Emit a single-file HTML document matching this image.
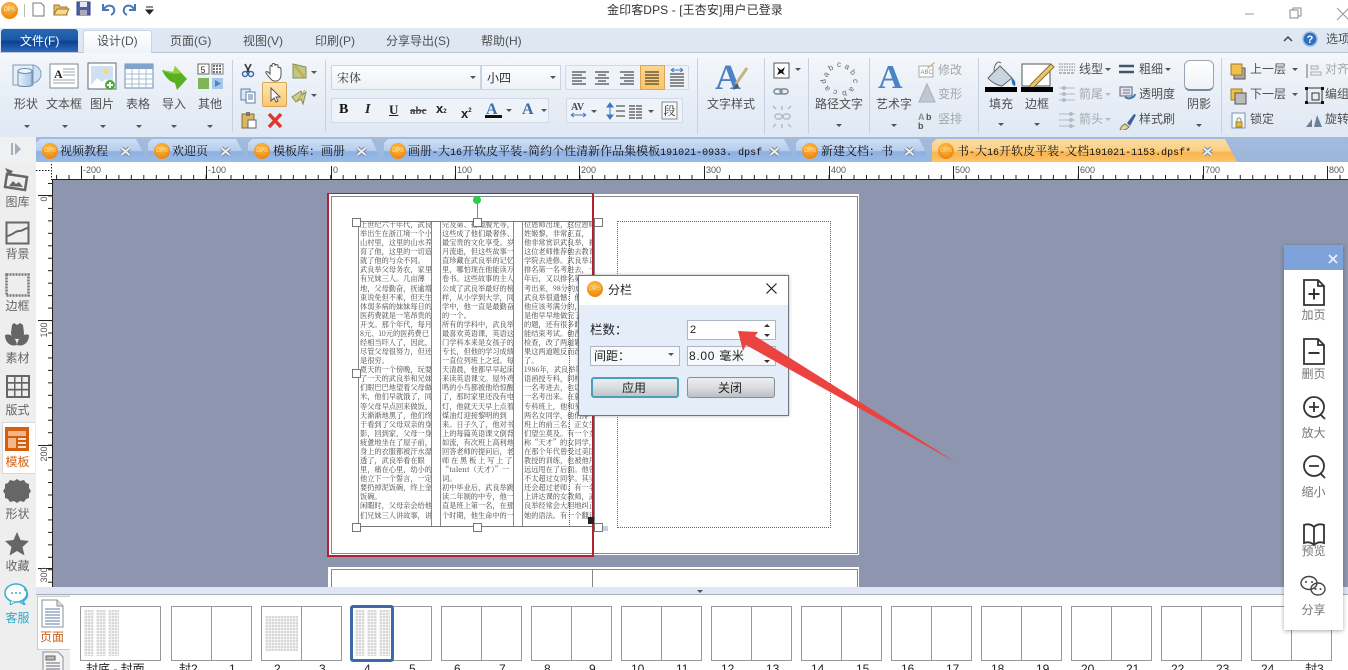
<!DOCTYPE html>
<html lang="zh"><head><meta charset="utf-8"><title>金印客DPS</title>
<style>
html,body{margin:0;padding:0;width:1348px;height:670px;overflow:hidden;background:#fff}
body{position:relative;font:12px/14px "Liberation Sans","Noto Sans CJK SC",sans-serif;color:#505050}
div,i,svg,b{position:absolute;font-style:normal;font-weight:normal}
.t{white-space:nowrap}
.g{color:#a4a8ad}
.dps{border-radius:50%;background:radial-gradient(circle at 45% 30%,#fbc04a,#f08a12 70%,#d96f0a);color:#ffe9c0;font-size:6px;line-height:16px;width:16px;height:16px;text-align:center;letter-spacing:-.2px}
.arr{width:0;height:0;border-left:3px solid transparent;border-right:3px solid transparent;border-top:3px solid #555}
.tab{top:139px;height:23px;background:linear-gradient(#cfdff3,#b6cdec 50%,#8db0e2 55%,#9abce8);clip-path:polygon(0 100%,0 4px,4px 0,calc(100% - 12px) 0,100% 100%)}
.tt{top:144px;font:12px/14px "Noto Serif CJK SC",serif;color:#111;white-space:nowrap}
.tt span{font:10px/14px "Liberation Mono",monospace}
.x{top:146px}
.sb{color:#666;left:0;width:35px;text-align:center}
.col{top:221px;width:74px;font:7.2px/9.08px "Noto Serif CJK SC",serif;color:#444;white-space:pre;height:305px;overflow:hidden;border-left:1px solid #888;border-right:1px solid #888;padding-left:1px;box-sizing:border-box}
.h{width:9px;height:9px;background:#fff;border:1px solid #777;box-sizing:border-box}
.th{top:606px;height:55px;width:81px;background:#fff;border:1px solid #999;box-sizing:border-box}
.th:after{content:"";position:absolute;left:39px;top:0;bottom:0;width:1px;background:#999}
.th.nl:after{display:none}
.tl{top:662px;color:#222;font-size:12px;line-height:14px;white-space:nowrap}
.tex{background:repeating-linear-gradient(90deg,rgba(255,255,255,.55) 0 1px,transparent 1px 3px),repeating-linear-gradient(#d8d8d8 0 2px,#f0f0f0 2px 3px)}
.rp{left:1284px;width:59px;text-align:center;color:#777}
</style></head><body>

<!-- title bar -->
<div class="dps" style="left:1px;top:2px;width:17px;height:17px;line-height:17px">DPS</div>
<div style="left:24px;top:4px;width:1px;height:13px;background:#bbb"></div>
<svg style="left:30px;top:0" width="130" height="20">
<path d="M3 3h8l3 3v10H3z" fill="#fff" stroke="#777"/>
<path d="M24 15V5h5l1 2h7v8z" fill="#e9bd5c" stroke="#9a7a32"/><path d="M24 15l3-6h12l-3 6z" fill="#f6d88a" stroke="#9a7a32"/>
<rect x="47" y="2" width="13" height="13" fill="#4c5fa8" stroke="#33407c"/><rect x="50" y="2" width="7" height="5" fill="#e4e8f3"/><rect x="50" y="10" width="7" height="5" fill="#aab"/>
<path d="M73 4v6h6M74 9c3-5 9-4 10 0 1 3-1 5-3 6" fill="none" stroke="#4a76b5" stroke-width="2"/>
<path d="M105 4v6h-6M104 9c-3-5-9-4-10 0-1 3 1 5 3 6" fill="none" stroke="#4a76b5" stroke-width="2"/>
<path d="M116 7h7M116 10h7l-3.500 4z" fill="#222" stroke="#222"/>
</svg>
<div class="t" style="left:607px;top:3px;color:#333;letter-spacing:.1px">金印客DPS - [王杏安]用户已登录</div>
<svg style="left:1240px;top:4px" width="108" height="20"><path d="M5 10h9" stroke="#999"/><rect x="53" y="4" width="8" height="8" fill="#fff" stroke="#888"/><rect x="50" y="6" width="8" height="8" fill="#fff" stroke="#888"/><path d="M97 4l12 12M109 4L97 16" stroke="#999"/></svg>

<!-- menu row -->
<div style="left:0;top:28px;width:1348px;height:25px;background:linear-gradient(#dfe8f3,#dde6f2);border-bottom:1px solid #b9c6d6;box-sizing:border-box"></div>
<div style="left:1px;top:29px;width:77px;height:23px;background:linear-gradient(#2a66b2,#1c5aa8 45%,#0d4190 55%,#2e6cbd);border-radius:3px 3px 0 0"></div>
<div class="t" style="left:20px;top:34px;color:#fff">文件(F)</div>
<div style="left:83px;top:30px;width:69px;height:23px;background:linear-gradient(#fff,#eef3fa);border:1px solid #c9d5e4;border-bottom:none;border-radius:3px 3px 0 0;box-sizing:border-box"></div>
<div class="t" style="left:97px;top:34px">设计(D)</div>
<div class="t" style="left:170px;top:34px">页面(G)</div>
<div class="t" style="left:243px;top:34px">视图(V)</div>
<div class="t" style="left:315px;top:34px">印刷(P)</div>
<div class="t" style="left:386px;top:34px">分享导出(S)</div>
<div class="t" style="left:481px;top:34px">帮助(H)</div>
<svg style="left:1280px;top:30px" width="40" height="20"><path d="M4 11l4-4 4 4" fill="none" stroke="#444" stroke-width="1.500"/><circle cx="30" cy="9" r="7" fill="#2f6fc0" stroke="#9db9de" stroke-width="1.500"/><text x="30" y="13" font-size="11" font-weight="bold" fill="#fff" text-anchor="middle" font-family="Liberation Sans">?</text></svg>
<div class="t" style="left:1326px;top:32px">选项</div>

<!-- ribbon -->
<div style="left:0;top:53px;width:1348px;height:85px;background:linear-gradient(#f4f7fb,#e6edf6 60%,#dfe8f3)"></div>
<div style="left:232px;top:60px;width:1px;height:72px;background:#c6d1df"></div>
<div style="left:325px;top:60px;width:1px;height:72px;background:#c6d1df"></div>
<div style="left:697px;top:58px;width:1px;height:76px;background:#c6d1df"></div>
<div style="left:764px;top:58px;width:1px;height:76px;background:#c6d1df"></div>
<div style="left:808px;top:58px;width:1px;height:76px;background:#c6d1df"></div>
<div style="left:869px;top:58px;width:1px;height:76px;background:#c6d1df"></div>
<div style="left:978px;top:58px;width:1px;height:76px;background:#c6d1df"></div>
<div style="left:1221px;top:58px;width:1px;height:76px;background:#c6d1df"></div>

<svg style="left:0;top:52px" width="330" height="85">
<defs><linearGradient id="bl" x1="0" x2="1"><stop offset="0" stop-color="#e8f0f8"/><stop offset="1" stop-color="#a8c6e4"/></linearGradient></defs>
<!-- shape -->
<circle cx="32" cy="22" r="9" fill="#cfe0f1" stroke="#7fa0c0"/><rect x="13" y="13" width="20" height="20" fill="#e6eef7" stroke="#7f9ab8"/>
<path d="M18 19v14c0 2 14 2 14 0V19z" fill="url(#bl)" stroke="#6b8db0"/><ellipse cx="25" cy="19" rx="7" ry="2.500" fill="#eef4fa" stroke="#6b8db0"/>
<!-- textbox -->
<rect x="50" y="12" width="28" height="24" fill="#fff" stroke="#7b8a9a"/><text x="54" y="26" font-family="Liberation Serif" font-weight="bold" font-size="12" fill="#222">A</text><path d="M63 17h12M63 20h12M63 23h12M53 28h22M53 31h22" stroke="#9aa4ae"/>
<!-- picture -->
<rect x="88" y="11" width="28" height="26" fill="#fff" stroke="#667"/><rect x="91" y="14" width="22" height="19" fill="#cfe0f3"/><circle cx="106" cy="19" r="3" fill="#f0d98a"/><path d="M91 33l6-7 5 4 4-3 7 6z" fill="#fff"/><circle cx="110" cy="33" r="5" fill="#4aaa34"/><path d="M110 30v6M107 33h6" stroke="#fff" stroke-width="2"/>
<!-- table -->
<rect x="125" y="12" width="28" height="24" fill="#fff" stroke="#7190b4"/><rect x="125" y="12" width="28" height="5" fill="#7fa3cb"/><path d="M125 22h28M125 27h28M125 32h28M132 17v19M139 17v19M146 17v19" stroke="#a6bdd6"/>
<!-- import -->
<path d="M162 18l11 2 2-6 12 13-10 11-2-7c-4-1-9-4-13-13z" fill="#5aae22"/><path d="M162 18l11 2 2-6 6 7c-6 2-14 0-19-3z" fill="#90d23e"/>
<!-- other -->
<rect x="198" y="12" width="11" height="10" fill="#fff" stroke="#666"/><text x="200.500" y="21" font-size="9" fill="#333" font-family="Liberation Sans">5</text><rect x="212" y="12" width="11" height="10" fill="#fff" stroke="#777"/><path d="M213 14h9M213 17h9M213 20h9" stroke="#445" stroke-width="1.500" stroke-dasharray="2 1"/><rect x="198" y="26" width="11" height="11" fill="#7fb45a"/><rect x="212" y="26" width="11" height="11" fill="#a7c8ea"/><path d="M215 28l6 3.500-6 3.500z" fill="#4d86c4"/>
<!-- arrows -->
<g fill="#555"><path d="M24 73h6l-3 3zM62 73h6l-3 3zM100 73h6l-3 3zM136 73h6l-3 3zM171 73h6l-3 3zM207 73h6l-3 3z"/></g>
<!-- clipboard section -->
<path d="M245 12l4 8M251 12l-4 8" stroke="#333" stroke-width="1.500"/><circle cx="245" cy="22" r="2.500" fill="none" stroke="#3a6aa8" stroke-width="1.500"/><circle cx="251" cy="22" r="2.500" fill="none" stroke="#3a6aa8" stroke-width="1.500"/>
<path d="M270 22v-7c0-2 2-2 2 0v-2c0-2 3-2 3 0v1c0-2 3-2 3 0v2c0-1 3-1 3 1v6c0 3-2 6-5 6h-2c-2 0-3-2-5-4l-3-4c-1-2 2-2 4 1z" fill="#fff" stroke="#555"/>
<path d="M293 12l13 3v11h-13z" fill="#b9c98a" stroke="#8a8a55"/><path d="M295 14l9 11" stroke="#d8a13c" stroke-width="2"/><path d="M311 19h6l-3 3z" fill="#555"/>
<rect x="241" y="37" width="9" height="11" fill="#dce6f2" stroke="#5f7da0"/><rect x="246" y="40" width="9" height="11" fill="#fff" stroke="#5f7da0"/><path d="M248 43h5M248 45h5M248 47h5" stroke="#4d78a8"/>
<path d="M292 45l9-6 1 4 4-3-3 12-2-5-5 3z" fill="#c7d08e" stroke="#8a8a55"/><path d="M296 50l9-12" stroke="#c9a04a"/><path d="M311 42h6l-3 3z" fill="#555"/>
<rect x="242" y="62" width="12" height="14" fill="#d9b766" stroke="#85702f"/><rect x="246" y="60" width="4" height="4" fill="#777"/><rect x="248" y="68" width="8" height="8" fill="#fff" stroke="#666"/>
<path d="M269 62l12 13M281 62l-12 13" stroke="#e0372c" stroke-width="3.500"/>
</svg>
<div style="left:262px;top:82px;width:25px;height:25px;background:linear-gradient(#fde5b0,#fbc873);border:1px solid #d9a856;box-sizing:border-box;border-radius:2px"></div>
<svg style="left:262px;top:82px" width="25" height="25"><path d="M9 6l0 13 3-3 2 4 2-1-2-4h4z" fill="#fff" stroke="#555"/></svg>

<div class="t" style="left:14px;top:97px">形状</div>
<div class="t" style="left:46px;top:97px">文本框</div>
<div class="t" style="left:90px;top:97px">图片</div>
<div class="t" style="left:126px;top:97px">表格</div>
<div class="t" style="left:162px;top:97px">导入</div>
<div class="t" style="left:198px;top:97px">其他</div>

<!-- font boxes -->
<div style="left:331px;top:65px;width:150px;height:25px;background:linear-gradient(#fbfcfe,#edf2f8);border:1px solid #c9d4e2;box-sizing:border-box;border-radius:2px 0 0 2px"></div>
<div style="left:481px;top:65px;width:80px;height:25px;background:linear-gradient(#fbfcfe,#edf2f8);border:1px solid #c9d4e2;box-sizing:border-box"></div>
<div class="t" style="left:337px;top:71px;color:#333;font-family:'Noto Serif CJK SC',serif">宋体</div>
<div class="t" style="left:487px;top:71px;color:#333">小四</div>
<div class="arr" style="left:470px;top:76px"></div><div class="arr" style="left:550px;top:76px"></div>

<div style="left:565px;top:65px;width:124px;height:25px;background:#eef3f9;border:1px solid #d0d9e5;box-sizing:border-box;border-radius:2px"></div>
<div style="left:640px;top:65px;width:25px;height:25px;background:linear-gradient(#fcd58c,#fbc56c);border:1px solid #d8a856;box-sizing:border-box"></div>
<svg style="left:565px;top:65px" width="125" height="25">
<g stroke="#222" fill="none"><path d="M7 7h14M7 10h10M7 13h14M7 16h10M7 19h14"/><path d="M30 7h14M33 10h8M30 13h14M33 16h8M30 19h14"/><path d="M55 7h14M59 10h10M55 13h14M59 16h10M55 19h14"/><path d="M80 7h14M80 10h14M80 13h14M80 16h14M80 19h14"/><path d="M105 9h14M105 12h14M105 15h14M105 18h14M105 21h14"/></g>
<path d="M106 5h12M106 5l3-2M106 5l3 2M118 5l-3-2M118 5l-3 2" stroke="#3a78b8" fill="none"/>
</svg>

<div style="left:331px;top:98px;width:218px;height:25px;background:#eef3f9;border:1px solid #d0d9e5;box-sizing:border-box;border-radius:2px"></div>
<div class="t" style="left:339px;top:103px;font:bold 14px/14px 'Liberation Serif',serif;color:#111">B</div>
<div class="t" style="left:365px;top:103px;font:italic bold 14px/14px 'Liberation Serif',serif;color:#222">I</div>
<div class="t" style="left:389px;top:103px;font:bold 13px/14px 'Liberation Serif',serif;color:#222;text-decoration:underline">U</div>
<div class="t" style="left:410px;top:104px;font:bold 11px/14px 'Liberation Serif',serif;color:#444;text-decoration:line-through">abc</div>
<div class="t" style="left:436px;top:102px;font:bold 13px/14px 'Liberation Sans',sans-serif;color:#222">x<span style="font-size:6px">2</span></div>
<div class="t" style="left:461px;top:104px;font:bold 13px/14px 'Liberation Sans',sans-serif;color:#222">x<span style="font-size:6px;vertical-align:6px">2</span></div>
<div class="t" style="left:486px;top:102px;font:bold 16px/16px 'Liberation Serif',serif;color:#3b6fae">A</div>
<div style="left:485px;top:115px;width:17px;height:3px;background:#111"></div><div class="arr" style="left:506px;top:109px"></div>
<div class="t" style="left:522px;top:102px;font:bold 16px/16px 'Liberation Serif',serif;color:#3e6a9e">A</div><div class="arr" style="left:541px;top:109px"></div>

<div style="left:566px;top:98px;width:117px;height:25px;background:#eef3f9;border:1px solid #d0d9e5;box-sizing:border-box;border-radius:2px"></div>
<svg style="left:566px;top:98px" width="118" height="25">
<text x="5" y="12" font-family="Liberation Serif" font-weight="bold" font-size="10" fill="#445">AV</text><path d="M5 17h15M5 17l3-2M5 17l3 2M20 17l-3-2M20 17l-3 2" stroke="#3a78b8" fill="none"/><path d="M25 12h6l-3 3z" fill="#555"/>
<path d="M44 6v14M44 5l-3 4h6zM44 21l-3-4h6z" fill="#3a78b8" stroke="#3a78b8"/><path d="M50 8h9M50 13h9M50 18h9" stroke="#333"/>
<path d="M63 8h13M63 11h13M63 14h13M63 17h13M63 20h13" stroke="#222" stroke-dasharray="6 1"/><path d="M82 12h6l-3 3z" fill="#555"/>
<rect x="96" y="4" width="15" height="17" fill="#f7f9fc" stroke="#888"/><text x="97.500" y="17" font-size="12" fill="#333" font-family="Noto Serif CJK SC">段</text>
</svg>

<!-- text style -->
<svg style="left:710px;top:58px" width="50" height="36"><text x="5" y="31" font-family="Liberation Serif" font-weight="bold" font-size="36" fill="#4b83c4">A</text><path d="M37 10L26 26" stroke="#c2b58a" stroke-width="3"/><path d="M27 25l-3 5-1 2 6-3z" fill="#555"/></svg>
<div class="t" style="left:707px;top:97px">文字样式</div>
<!-- link icons -->
<svg style="left:770px;top:58px" width="36" height="72">
<rect x="4" y="5" width="15" height="15" fill="#fff" stroke="#556"/><path d="M7 9l4 3 4-3-2 5 2 3-4-2-4 2 2-4z" fill="#111"/><path d="M25 10h6l-3 3z" fill="#555"/>
<g fill="none" stroke="#7a8696" stroke-width="1.500"><rect x="4" y="31" width="8" height="5" rx="2.500"/><rect x="10" y="31" width="8" height="5" rx="2.500"/></g>
<g fill="none" stroke="#b5bcc6" stroke-width="1.500"><rect x="5" y="56" width="7" height="5" rx="2.500"/><rect x="13" y="56" width="7" height="5" rx="2.500"/><path d="M12 52v-4M12 66v4M6 51l-3-3M18 51l3-3M6 66l-3 3M18 66l3 3"/></g>
</svg>
<!-- path text -->
<svg style="left:817px;top:60px" width="50" height="36"><g font-family="Liberation Sans" font-size="8" fill="#666" text-anchor="middle">
<text x="11" y="16" transform="rotate(-50 11 16)">a</text><text x="15" y="10" transform="rotate(-30 15 10)">b</text><text x="22" y="7">c</text><text x="29" y="9" transform="rotate(25 29 9)">a</text><text x="34" y="14" transform="rotate(50 34 14)">b</text><text x="36" y="21" transform="rotate(90 36 21)">c</text><text x="33" y="28" transform="rotate(130 33 28)">a</text><text x="27" y="31" transform="rotate(170 27 31)">b</text><text x="19" y="30" transform="rotate(200 19 30)">c</text><text x="12" y="27" transform="rotate(230 12 27)">a</text><text x="9" y="21" transform="rotate(260 9 21)">d</text></g></svg>
<div class="t" style="left:815px;top:97px">路径文字</div>
<div class="arr" style="left:836px;top:124px"></div>
<svg style="left:878px;top:58px" width="30" height="36"><text x="0" y="30" font-family="Liberation Serif" font-weight="bold" font-size="34" fill="#4b83c4">A</text></svg>
<div class="t" style="left:876px;top:97px">艺术字</div>
<div class="arr" style="left:891px;top:124px"></div>
<svg style="left:916px;top:58px" width="22" height="72">
<rect x="3" y="8" width="14" height="11" fill="#fff" stroke="#aaa"/><text x="4.500" y="16" font-size="6" fill="#889">ABC</text><path d="M11 10l7-6 1 1-7 6z" fill="#c5b78e"/>
<path d="M11 26l-8 18h16z" fill="#c0c8d2" stroke="#a7b0bc"/>
<text x="2" y="62" font-size="9" font-weight="bold" fill="#8a8f96" font-family="Liberation Sans">A</text><text x="10" y="62" font-size="9" font-weight="bold" fill="#555" font-family="Liberation Sans">b</text><text x="2" y="71" font-size="9" font-weight="bold" fill="#555" font-family="Liberation Sans">b</text>
</svg>
<div class="t g" style="left:938px;top:63px">修改</div>
<div class="t g" style="left:938px;top:87px">变形</div>
<div class="t g" style="left:938px;top:112px">竖排</div>

<!-- fill / border -->
<svg style="left:985px;top:58px" width="70" height="36">
<path d="M3 20l12-12 12 12-10 8c-3 0-11-4-14-8z" fill="#c9d6e2" stroke="#666"/><path d="M9 14c0-8 4-12 7-9" fill="none" stroke="#666"/><path d="M27 20c3 2 4 5 3 8-3 0-4-5-3-8z" fill="#2e6fb5"/>
<rect x="0" y="29" width="32" height="5" fill="#000"/>
<rect x="37" y="6" width="28" height="22" fill="#fff" stroke="#555"/><path d="M46 26l20-20 3 3-20 20-5 1z" fill="#e9c66e" stroke="#8c7436"/>
<rect x="36" y="29" width="32" height="5" fill="#000"/>
</svg>
<div class="t" style="left:989px;top:97px">填充</div><div class="t" style="left:1025px;top:97px">边框</div>
<div class="arr" style="left:998px;top:123px"></div><div class="arr" style="left:1034px;top:123px"></div>
<svg style="left:1058px;top:60px" width="20" height="70">
<path d="M1 4h16M1 7h16M1 10h16" stroke="#777" stroke-dasharray="1.500 1"/><path d="M1 13h16" stroke="#777" stroke-dasharray="3 1"/>
<g stroke="#b5bac2" fill="#b5bac2"><path d="M1 28h16M1 34h16M1 40h16"/><circle cx="6" cy="28" r="1.500"/><circle cx="6" cy="34" r="1.500"/><circle cx="6" cy="40" r="1.500"/></g>
<g stroke="#b5bac2" fill="#b5bac2"><path d="M1 54h16M1 60h16M1 66h16"/><circle cx="13" cy="54" r="1.500"/><circle cx="13" cy="60" r="1.500"/><circle cx="13" cy="66" r="1.500"/></g>
</svg>
<div class="t" style="left:1079px;top:62px">线型</div><div class="arr" style="left:1105px;top:68px"></div>
<div class="t g" style="left:1079px;top:87px">箭尾</div><div class="arr" style="left:1105px;top:93px;border-top-color:#bbb"></div>
<div class="t g" style="left:1079px;top:112px">箭头</div><div class="arr" style="left:1105px;top:118px;border-top-color:#bbb"></div>
<svg style="left:1118px;top:60px" width="20" height="70">
<path d="M1 6h15M1 12h15" stroke="#445566" stroke-width="2.500"/>
<rect x="2" y="27" width="12" height="9" fill="#dde3ea" stroke="#667"/><path d="M5 30h7M5 33h7" stroke="#778"/><path d="M7 37a6 5 0 0 0 10-3" fill="none" stroke="#3a78b8" stroke-width="2"/>
<path d="M2 70c1-4 3-5 5-6l4 3c-2 2-5 4-9 3z" fill="#e7d28f" stroke="#776"/><path d="M9 63l7-9 2 1-6 11z" fill="#3b5f9c"/>
</svg>
<div class="t" style="left:1139px;top:62px">粗细</div><div class="arr" style="left:1165px;top:68px"></div>
<div class="t" style="left:1139px;top:87px">透明度</div>
<div class="t" style="left:1139px;top:112px">样式刷</div>
<div style="left:1184px;top:60px;width:30px;height:31px;background:linear-gradient(#fff,#eef3f9);border:1px solid #9aa5b3;border-bottom:2px solid #7d8896;box-sizing:border-box;border-radius:6px"></div>
<div class="t" style="left:1187px;top:97px">阴影</div><div class="arr" style="left:1196px;top:124px"></div>

<svg style="left:1228px;top:60px" width="22" height="70">
<rect x="6" y="8" width="11" height="11" fill="#aaa" stroke="#555"/><rect x="3" y="4" width="11" height="11" fill="#f1c14d" stroke="#a07a28"/>
<rect x="3" y="29" width="11" height="11" fill="#f1c14d" stroke="#a07a28"/><rect x="7" y="33" width="11" height="11" fill="#bbb" stroke="#555"/>
<rect x="4" y="53" width="13" height="15" fill="#f4f7fb" stroke="#7b93b4"/><path d="M8 62h6v5H8z" fill="#e3bb44" stroke="#a88a22"/><path d="M9 62v-2a2 2 0 0 1 4 0v2" fill="none" stroke="#888"/>
</svg>
<div class="t" style="left:1250px;top:62px">上一层</div><div class="arr" style="left:1292px;top:68px"></div>
<div class="t" style="left:1250px;top:87px">下一层</div><div class="arr" style="left:1292px;top:93px"></div>
<div class="t" style="left:1250px;top:112px">锁定</div>
<svg style="left:1304px;top:60px" width="22" height="70">
<path d="M3 4v14" stroke="#999" stroke-width="1.500"/><path d="M7 6h7v3H7zM7 12h10v3H7z" fill="none" stroke="#aaa"/>
<rect x="3" y="28" width="15" height="15" fill="none" stroke="#333"/><rect x="8" y="33" width="7" height="7" fill="none" stroke="#333"/><g fill="#111"><rect x="1" y="27" width="3" height="3"/><rect x="17" y="27" width="3" height="3"/><rect x="1" y="41" width="3" height="3"/><rect x="17" y="41" width="3" height="3"/></g>
<path d="M2 67l6-8v8zM10 67l3-12 5 12z" fill="#6d7f93"/>
</svg>
<div class="t g" style="left:1325px;top:62px">对齐</div>
<div class="t" style="left:1325px;top:87px">编组</div>
<div class="t" style="left:1325px;top:112px">旋转</div>

<!-- tab bar -->
<div style="left:0;top:137px;width:1348px;height:25px;background:#eef0f2"></div>
<div style="left:36px;top:137px;width:1312px;height:25px;background:linear-gradient(#a2bbdd,#9cb6dc)"></div>
<svg style="left:9px;top:141px" width="14" height="16"><rect x="2" y="2" width="2" height="12" fill="#aab"/><path d="M6 2l6 6-6 6z" fill="#aab"/></svg>
<div class="tab" style="left:36px;width:112px"></div>
<div class="tab" style="left:148px;width:100px"></div>
<div class="tab" style="left:248px;width:135px"></div>
<div class="tab" style="left:384px;width:412px"></div>
<div class="tab" style="left:796px;width:135px"></div>
<div class="tab" style="left:932px;width:305px;background:linear-gradient(#fcdca0,#fbd086 50%,#f9b44f 60%,#fbc46c)"></div>
<div class="dps" style="left:42px;top:143px">DPS</div><div class="tt" style="left:60px">视频教程</div>
<svg class="x" style="left:119px" width="13" height="11"><path d="M2.500 2l8 7M10.500 2l-8 7" stroke="#7d8794" stroke-width="4"/><path d="M2.500 2l8 7M10.500 2l-8 7" stroke="#e8edf3" stroke-width="2"/></svg>
<div class="dps" style="left:154px;top:143px">DPS</div><div class="tt" style="left:172px">欢迎页</div>
<svg class="x" style="left:219px" width="13" height="11"><path d="M2.500 2l8 7M10.500 2l-8 7" stroke="#7d8794" stroke-width="4"/><path d="M2.500 2l8 7M10.500 2l-8 7" stroke="#e8edf3" stroke-width="2"/></svg>
<div class="dps" style="left:254px;top:143px">DPS</div><div class="tt" style="left:273px">模板库：画册</div>
<svg class="x" style="left:355px" width="13" height="11"><path d="M2.500 2l8 7M10.500 2l-8 7" stroke="#7d8794" stroke-width="4"/><path d="M2.500 2l8 7M10.500 2l-8 7" stroke="#e8edf3" stroke-width="2"/></svg>
<div class="dps" style="left:390px;top:143px">DPS</div><div class="tt" style="left:408px">画册<span>-</span>大<span>16</span>开软皮平装<span>-</span>简约个性清新作品集模板<span>191021-0933. dpsf</span></div>
<svg class="x" style="left:768px" width="13" height="11"><path d="M2.500 2l8 7M10.500 2l-8 7" stroke="#7d8794" stroke-width="4"/><path d="M2.500 2l8 7M10.500 2l-8 7" stroke="#e8edf3" stroke-width="2"/></svg>
<div class="dps" style="left:802px;top:143px">DPS</div><div class="tt" style="left:821px">新建文档：书</div>
<svg class="x" style="left:903px" width="13" height="11"><path d="M2.500 2l8 7M10.500 2l-8 7" stroke="#7d8794" stroke-width="4"/><path d="M2.500 2l8 7M10.500 2l-8 7" stroke="#e8edf3" stroke-width="2"/></svg>
<div class="dps" style="left:938px;top:143px;color:#ffd9a0">DPS</div><div class="tt" style="left:957px">书<span>-</span>大<span>16</span>开软皮平装<span>-</span>文档<span>191021-1153.dpsf*</span></div>
<svg class="x" style="left:1201px" width="13" height="11"><path d="M2.500 2l8 7M10.500 2l-8 7" stroke="#7d8794" stroke-width="4"/><path d="M2.500 2l8 7M10.500 2l-8 7" stroke="#e8edf3" stroke-width="2"/></svg>

<!-- canvas -->
<div style="left:52px;top:180px;width:1296px;height:407px;background:#8d96ae"></div>

<!-- sidebar -->
<div style="left:0;top:162px;width:36px;height:508px;background:#eeeeee"></div>
<div style="left:2px;top:422px;width:33px;height:52px;background:#fff;border:1px solid #d8d8d8;border-right:none;box-sizing:border-box"></div>
<svg style="left:0;top:165px" width="36" height="440">
<g fill="#666">
<path d="M7 9l20 3-2 13-20-3z" fill="none" stroke="#666" stroke-width="2.500"/><path d="M5 3l8 3-4 5z"/><path d="M9 21l4-5 3 3 3-2 4 5z"/>
<rect x="6.500" y="57.500" width="22" height="21" fill="none" stroke="#666" stroke-width="2"/><path d="M7 71c6-1 8-5 12-5 4 0 6-3 9-3" fill="none" stroke="#666" stroke-width="2"/>
<rect x="6.500" y="109.500" width="22" height="21" fill="none" stroke="#777" stroke-width="2.500" stroke-dasharray="2 1"/>
<path d="M12 160l2-2 3 2 3-2 3 2 1 8c0 4-3 6-7 6s-6-3-6-6z"/><path d="M5 170c5-2 11 2 12 10-6 2-12-2-12-10zM29 170c-5-2-11 2-12 10 6 2 12-2 12-10z"/>
<path d="M6 210h24v23H6z" fill="#666"/><path d="M8 212h6v5H8zM15.500 212h5.500v5h-5.500zM22.500 212h5.500v5h-5.500zM8 218.800h6v5H8zM15.500 218.800h5.500v5h-5.500zM22.500 218.800h5.500v5h-5.500zM8 225.500h6v5.500H8zM15.500 225.500h5.500v5.500h-5.500zM22.500 225.500h5.500v5.500h-5.500z" fill="#eee"/>
<rect x="5" y="262" width="24" height="24" fill="#d2600e"/><path d="M8 266h18v5H8zM8 273h8v10H8z" fill="#f3b58a"/><path d="M18 273h8v2h-8zM18 277h8v2h-8zM18 281h8v2h-8z" fill="#f8e0cf"/>
<path d="M17 314l3 2 4-1 2 3 3 1 0 4 2 3-2 3 0 4-3 1-2 3-4-1-3 2-3-2-4 1-2-3-3-1 0-4-2-3 2-3 0-4 3-1 2-3 4 1z"/>
<path d="M17 367l3.500 8 8.500 1-6.500 6 2 8.500-7.500-4.500-7.500 4.500 2-8.500-6.500-6 8.500-1z"/>
</g>
<ellipse cx="16" cy="428" rx="11" ry="9" fill="#fff" stroke="#37b0cf" stroke-width="1.500"/><path d="M11 436l-1 4 5-3" fill="#fff" stroke="#37b0cf"/><path d="M24 424c3 2 4 5 3 8-1 2-2 3-4 4l2 4-5-3" fill="none" stroke="#37b0cf" stroke-width="1.500"/>
<circle cx="12" cy="428" r="1" fill="#37b0cf"/><circle cx="16" cy="428" r="1" fill="#37b0cf"/><circle cx="20" cy="428" r="1" fill="#37b0cf"/>
</svg>
<div class="t sb" style="top:195px">图库</div>
<div class="t sb" style="top:247px">背景</div>
<div class="t sb" style="top:299px">边框</div>
<div class="t sb" style="top:351px">素材</div>
<div class="t sb" style="top:403px">版式</div>
<div class="t sb" style="top:455px;color:#d2600e">模板</div>
<div class="t sb" style="top:507px">形状</div>
<div class="t sb" style="top:559px">收藏</div>
<div class="t sb" style="top:611px;color:#2fa9c6">客服</div>

<!-- rulers -->
<div style="left:36px;top:162px;width:1312px;height:18px;background:#fff"></div>
<div style="left:36px;top:162px;width:16px;height:425px;background:#fff"></div>
<svg style="left:36px;top:162px" width="1312" height="18">
<defs><pattern id="tk" patternUnits="userSpaceOnUse" x="45" y="0" width="12.46" height="18"><path d="M.5 13v5" stroke="#222"/></pattern></defs>
<rect x="16" y="0" width="1296" height="18" fill="url(#tk)"/>
<path d="M16 17.500h1296M45.500 4v14M170.500 4v14M295.500 4v14M419.500 4v14M543.500 4v14M668.500 4v14M793.500 4v14M917.500 4v14M1042.500 4v14M1167.500 4v14M1291.500 4v14" stroke="#222"/>
<path d="M0 8.500h15M15.500 2v16" stroke="#222" stroke-dasharray="1.500 1.500"/>
<g font-family="Liberation Sans" font-size="9" fill="#555"><text x="47" y="11">-200</text><text x="172" y="11">-100</text><text x="297" y="11">0</text><text x="421" y="11">100</text><text x="545" y="11">200</text><text x="670" y="11">300</text><text x="795" y="11">400</text><text x="919" y="11">500</text><text x="1044" y="11">600</text><text x="1169" y="11">700</text><text x="1293" y="11">800</text></g>
</svg>
<svg style="left:36px;top:180px" width="17" height="407">
<defs><pattern id="tv" patternUnits="userSpaceOnUse" x="0" y="3" width="17" height="12.46"><path d="M12 .5h5" stroke="#222"/></pattern></defs>
<rect x="0" y="0" width="17" height="407" fill="url(#tv)"/>
<path d="M16.500 0v407M2 15.500h15M2 140.500h15M2 265.500h15M2 388.500h15" stroke="#222"/>
<g font-family="Liberation Sans" font-size="9" fill="#555" text-anchor="middle"><text transform="translate(11 19) rotate(-90)">0</text><text transform="translate(11 150) rotate(-90)">100</text><text transform="translate(11 274) rotate(-90)">200</text><text transform="translate(11 395) rotate(-90)">300</text></g>
</svg>

<!-- page -->
<div style="left:328px;top:194px;width:531px;height:361px;background:#fff"></div>
<div style="left:331px;top:196px;width:527px;height:358px;border:1px solid #888;box-sizing:border-box"></div>
<div style="left:617px;top:221px;width:214px;height:307px;border:1px dotted #666;box-sizing:border-box"></div>
<div style="left:328px;top:567px;width:531px;height:20px;background:#fff"></div>
<div style="left:331px;top:569px;width:527px;height:18px;border:1px solid #888;border-bottom:none;box-sizing:border-box"></div>
<div style="left:592px;top:569px;width:1px;height:18px;background:#888"></div>

<div class="col" style="left:358px">上世纪六十年代，武良
举出生在浙江境一个小
山村里，这里的山水养
育了他，这里的一切造
就了他的与众不同。
武良举父母务农，家里
有兄妹三人。几亩薄
地，父母勤奋，抚逾增
束说免但不乘，但天生
体弱多病的妹妹每日的
医药费就是一笔昂贵的
开支。那个年代，每月
8元、10元的医药费已
经相当吓人了，因此，
尽管父母很努力，但还
是很穷。
夏天的一个傍晚，玩耍
了一天的武良举和兄妹
们眼巴巴地望着父母做
米，他们早就饿了，同
等父母早点回来做饭。
天渐渐地黑了，他们终
于看到了父母双亲的身
影，回到家，父母一身
疲惫地坐在了屋子前，
身上的衣服都被汗水湿
透了，武良举看在眼
里，痛在心里，幼小的
他立下一个誓言，一定
要扔掉泥饭碗，终上金
饭碗。
闲暇时，父母亲会给他
们兄妹三人讲故事，讲</div>
<div class="col" style="left:440px">完及第、指缠腹光等，
这些成了他们最奢侈、
最宝贵的文化享受。岁
月流逝，但这些故事一
直珍藏在武良举的记忆
里，哪怕现在他能读万
卷书。这些故事的主人
公成了武良举最好的榜
样，从小学到大学，同
学中，他一直是最勤奋
的一个。
所有的学科中，武良举
最喜欢英语课，英语这
门学科本来是女孩子的
专长，但他的学习成绩
一直位列班上之冠。每
天清晨，他都早早起床
来读英语课文。屋外鸡
鸣的小鸟都被他给惊醒
了，那时家里还没有电
灯，他就天天早上点着
煤油灯迎接黎明的到
来。日子久了，他对书
上的每篇英语课文倒背
如流，有次班上高利地
回答老师的提问后，老
师 在 黑 板 上 写 上 了
“talent（天才）”一
词。
初中毕业后，武良举跳
读二年制的中专，他一
直是班上第一名，在那
个时期，他生命中的一</div>
<div class="col" style="left:522px;width:73px">位恩师出现，这位恩师
姓姬黎，非常正直，
他非常赏识武良举，把
这位老师推荐他去教育
学院去进修。武良举以
排名第一名考进去，一
年后，又以排名第一名
考出来，98分的成绩让
武良举很遗憾：他认为
他应该考满分的，原因
是他早早地做完了所有
的题，还有很多时间就
能结束考试。他没有再
检查，改了两道题，结
果这两道题反而改错
了。
1986年，武良举第一
语函授专科，同样以第
一名考进去，也以第
一名考出来。在就读
专科班上，他和另外
两名女同学，他们排
班上的前三名；正女生
们望尘莫及。有一个女
称“天才”的女同学，
在那个年代曾受过美国
教授的训练，也被他甩
远远甩在了后面。他曾
不太超过女同学。其实
还会超过老师；有一名
上讲达课的女教师，武
良举经常会大胆地纠正
她的语法。有一个翻译</div>
<div style="left:358px;top:221px;width:237px;height:1px;background:#777"></div>
<div style="left:358px;top:526px;width:237px;height:1px;background:#777"></div>
<div style="left:569px;top:221px;width:0;height:306px;border-left:1px dotted #555"></div>
<!-- red frame -->
<div style="left:327px;top:193px;width:267px;height:364px;border:1px solid #b5202f;border-width:1px 2px 2px 2px;box-sizing:border-box"></div>
<!-- handles -->
<div style="left:476.500px;top:203px;width:1px;height:18px;background:#888"></div>
<div style="left:473px;top:196px;width:8px;height:8px;border-radius:50%;background:#2dcb4f"></div>
<div class="h" style="left:352px;top:218px"></div><div class="h" style="left:473px;top:218px"></div><div class="h" style="left:594px;top:218px"></div>
<div class="h" style="left:352px;top:369px"></div>
<div class="h" style="left:352px;top:523px"></div><div class="h" style="left:473px;top:523px"></div><div class="h" style="left:594px;top:523px"></div>
<div style="left:588px;top:517px;width:6px;height:7px;background:#222"></div>
<div style="left:603px;top:526px;width:5px;height:5px;background:#c6cfe2"></div>

<!-- dialog -->
<div style="left:578px;top:275px;width:211px;height:141px;background:#e5edf9;border:1px solid #6f7680;box-sizing:border-box;box-shadow:0 0 3px rgba(60,60,60,.4)"></div>
<div style="left:579px;top:276px;width:209px;height:29px;background:#fff"></div>
<div class="dps" style="left:587px;top:281px;color:#ffdca6">DPS</div>
<div class="t" style="left:608px;top:283px;color:#222">分栏</div>
<svg style="left:765px;top:282px" width="14" height="14"><path d="M1.500 1.500l10 10M11.500 1.500l-10 10" stroke="#222" stroke-width="1.200"/></svg>
<div class="t" style="left:590px;top:323px;color:#222;font-size:12.500px">栏数：</div>
<div style="left:687px;top:320px;width:89px;height:20px;background:#fff;border:1px solid #adb6c2;box-sizing:border-box"></div>
<div class="t" style="left:690px;top:323px;color:#222;font-size:11px">2</div>
<div class="arr" style="left:764px;top:334px;border-top-color:#333"></div>
<div style="left:764px;top:324px;width:0;height:0;border-left:3px solid transparent;border-right:3px solid transparent;border-bottom:3px solid #333"></div>
<div style="left:590px;top:346px;width:90px;height:20px;background:#f7f9fc;border:1px solid #adb6c2;box-sizing:border-box"></div>
<div class="t" style="left:594px;top:349px;color:#222">间距：</div>
<div class="arr" style="left:668px;top:353px"></div>
<div style="left:687px;top:346px;width:89px;height:20px;background:#f7f9fc;border:1px solid #adb6c2;box-sizing:border-box"></div>
<div class="t" style="left:689px;top:349px;color:#222;letter-spacing:.7px">8.00 毫米</div>
<div class="arr" style="left:764px;top:360px;border-top-color:#333"></div>
<div style="left:591px;top:377px;width:88px;height:21px;background:linear-gradient(#e9eef3,#d9dde0 50%,#bfc4c9);border:2px solid #4d9fb8;border-radius:3px;box-sizing:border-box"></div>
<div class="t" style="left:622px;top:381px;color:#222">应用</div>
<div style="left:687px;top:377px;width:88px;height:21px;background:linear-gradient(#eceef1,#dadcdf 50%,#bcbfc3);border:1px solid #8a8f95;border-radius:3px;box-sizing:border-box"></div>
<div class="t" style="left:718px;top:381px;color:#222">关闭</div>

<!-- arrow -->
<svg style="left:730px;top:325px" width="235" height="145"><path d="M8 6L28 7l-3 4L227 138 16 20l-3 6z" fill="#ea4340"/></svg>

<!-- bottom -->
<div style="left:36px;top:587px;width:1312px;height:8px;background:#e0e6f5;border-bottom:1px solid #a9adb5;box-sizing:border-box"></div>
<div style="left:697px;top:590px;width:0;height:0;border-left:3px solid transparent;border-right:3px solid transparent;border-top:3px solid #555"></div>
<div style="left:36px;top:595px;width:1312px;height:75px;background:#fff"></div>
<div style="left:36px;top:595px;width:34px;height:75px;background:#eeeeee"></div>
<div style="left:37px;top:596px;width:33px;height:54px;background:#fff;border:1px solid #ccc;border-right:none;box-sizing:border-box"></div>
<svg style="left:38px;top:597px" width="32" height="73">
<path d="M4 3h15l6 6v21H4z" fill="#fff" stroke="#8a8f98"/><path d="M19 3v6h6" fill="#ddd" stroke="#8a8f98"/><path d="M7 12h15M7 15h15M7 18h15M7 21h15M7 24h15M7 27h15" stroke="#5e7ba3"/>
<path d="M5 55h15l5 5v18H5z" fill="#f5f5f5" stroke="#8a8f98"/><rect x="8" y="59" width="9" height="4" fill="#bbb" stroke="#666"/><path d="M8 66h14M8 69h14M8 72h14" stroke="#667"/>
</svg>
<div class="t" style="left:40px;top:630px;color:#c9601a">页面</div>

<div class="th nl" style="left:80px"><div class="tex" style="left:3px;top:3px;width:10px;height:46px"></div><div class="tex" style="left:15px;top:3px;width:10px;height:46px"></div><div class="tex" style="left:27px;top:3px;width:11px;height:46px"></div></div>
<div class="th" style="left:171px"></div>
<div class="th" style="left:261px"><div class="tex" style="left:3px;top:9px;width:33px;height:35px"></div></div>
<div class="th nl" style="left:351px"></div>
<div class="tex" style="left:355px;top:610px;width:10px;height:46px"></div><div class="tex" style="left:367px;top:610px;width:10px;height:46px"></div><div class="tex" style="left:379px;top:610px;width:11px;height:46px"></div>
<div style="left:350px;top:605px;width:44px;height:57px;border:3px solid #3d68ac;border-radius:3px;box-sizing:border-box"></div>
<div class="th" style="left:441px"></div><div class="th" style="left:531px"></div><div class="th" style="left:621px"></div><div class="th" style="left:711px"></div><div class="th" style="left:801px"></div><div class="th" style="left:891px"></div><div class="th" style="left:981px"></div><div class="th" style="left:1071px"></div><div class="th" style="left:1161px"></div><div class="th" style="left:1251px"></div>
<div class="tl" style="left:86px">封底 - 封面</div><div class="tl" style="left:179px">封2</div><div class="tl" style="left:229px">1</div><div class="tl" style="left:274px">2</div><div class="tl" style="left:319px">3</div><div class="tl" style="left:364px">4</div><div class="tl" style="left:409px">5</div><div class="tl" style="left:454px">6</div><div class="tl" style="left:499px">7</div><div class="tl" style="left:544px">8</div><div class="tl" style="left:589px">9</div><div class="tl" style="left:631px">10</div><div class="tl" style="left:676px">11</div><div class="tl" style="left:721px">12</div><div class="tl" style="left:766px">13</div><div class="tl" style="left:811px">14</div><div class="tl" style="left:856px">15</div><div class="tl" style="left:901px">16</div><div class="tl" style="left:946px">17</div><div class="tl" style="left:991px">18</div><div class="tl" style="left:1036px">19</div><div class="tl" style="left:1081px">20</div><div class="tl" style="left:1126px">21</div><div class="tl" style="left:1171px">22</div><div class="tl" style="left:1216px">23</div><div class="tl" style="left:1261px">24</div><div class="tl" style="left:1305px">封3</div>

<!-- right panel -->
<div style="left:1284px;top:245px;width:59px;height:385px;background:#fff;box-shadow:0 1px 4px rgba(40,40,40,.4);border-radius:2px 2px 0 0"></div>
<div style="left:1284px;top:245px;width:59px;height:25px;background:#7ea3da;border-radius:2px 2px 0 0"></div>
<svg style="left:1284px;top:245px" width="59" height="385">
<path d="M45 10l8 8M53 10l-8 8" stroke="#e8effa" stroke-width="1.800"/>
<g fill="none" stroke="#333" stroke-width="1.800">
<path d="M20 35h14l6 6v19H20zM34 35v6h6"/><path d="M24.500 49h11M30 43.500v11" stroke-width="2"/>
<path d="M20 94h14l6 6v19H20zM34 94v6h6"/><path d="M24.500 108h11" stroke-width="2"/>
<circle cx="30" cy="162" r="10"/><path d="M25 162h10M30 157v10M37 170l4 4"/>
<circle cx="30" cy="221" r="10"/><path d="M25 221h10M37 229l4 4"/>
<path d="M30 282c-3-3-7-3-10-2v18c3-1 7-1 10 2 3-3 7-3 10-2v-18c-3-1-7-1-10 2zM30 282v18"/>
</g>
<g fill="none" stroke="#444" stroke-width="1.400"><ellipse cx="25" cy="338" rx="8" ry="6.500"/><ellipse cx="34" cy="344" rx="7" ry="6"/></g>
<g fill="#444"><circle cx="22" cy="337" r="1"/><circle cx="28" cy="337" r="1"/><circle cx="31.500" cy="344" r="1"/><circle cx="36.500" cy="344" r="1"/></g>
</svg>
<div class="t rp" style="top:308px">加页</div>
<div class="t rp" style="top:367px">删页</div>
<div class="t rp" style="top:426px">放大</div>
<div class="t rp" style="top:485px">缩小</div>
<div class="t rp" style="top:544px">预览</div>
<div class="t rp" style="top:603px">分享</div>
</body></html>
